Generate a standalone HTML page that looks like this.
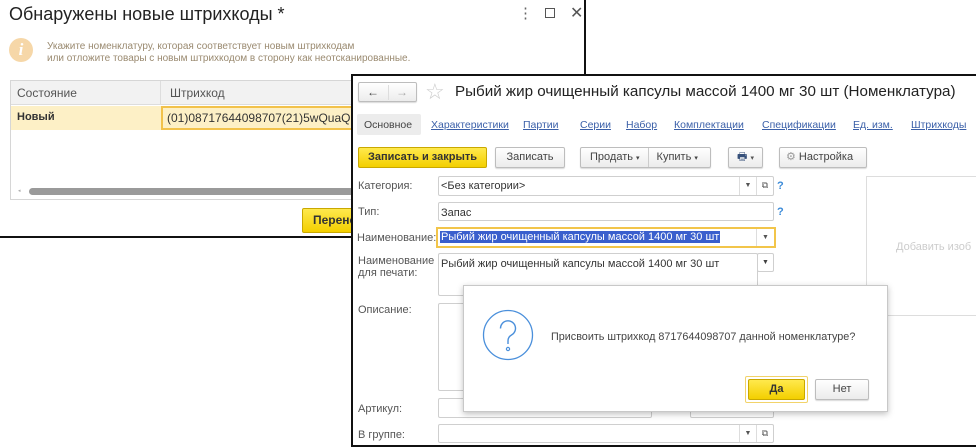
<!DOCTYPE html>
<html><head><meta charset="utf-8">
<style>
*{box-sizing:border-box;margin:0;padding:0}
body{width:976px;height:447px;background:#fff;position:relative;overflow:hidden;font-family:"Liberation Sans",Arial,sans-serif;font-size:11px;color:#404040}
.a{position:absolute;white-space:nowrap}
.inp{position:absolute;border:1px solid #cfcfcf;background:#fff;border-radius:2px}
.btn{position:absolute;border:1px solid #bdbdbd;border-radius:2px;background:linear-gradient(#fff,#ececec);text-align:center;color:#444;box-shadow:0 1px 1px rgba(0,0,0,.15);white-space:nowrap;font-size:11px}
.yb{position:absolute;border:1px solid #c9a800;border-radius:2px;background:linear-gradient(#ffe94d,#f3cf00);text-align:center;color:#333;font-weight:bold;white-space:nowrap}
.lnk{position:absolute;color:#3a5fa8;text-decoration:underline;font-size:10.5px;white-space:nowrap}
.dd{position:absolute;width:17px;border-left:1px solid #ddd;top:0;bottom:0;font-size:7px;text-align:center;color:#555}
</style></head><body>

<!-- window 1 -->
<div class="a" style="left:0;top:0;width:586px;height:238px;border:2px solid #111;border-top:none;border-left:none;background:#fff"></div>
<div class="a" style="left:9px;top:4px;font-size:18px;color:#222">Обнаружены новые штрихкоды *</div>
<div class="a" style="left:518px;top:4px;font-size:15px;color:#666">⋮</div>
<div class="a" style="left:545px;top:8px;width:10px;height:10px;border:1px solid #555"></div>
<div class="a" style="left:570px;top:3px;font-size:16px;color:#555">✕</div>
<div class="a" style="left:9px;top:38px;width:24px;height:24px;border-radius:50%;background:#f6d7a8;color:#fff;font:italic bold 17px 'Liberation Serif',serif;text-align:center;line-height:24px">i</div>
<div class="a" style="left:47px;top:41px;font-size:10px;color:#9a8a70;line-height:12px">Укажите номенклатуру, которая соответствует новым штрихкодам<br>или отложите товары с новым штрихкодом в сторону как неотсканированные.</div>
<div class="a" style="left:10px;top:80px;width:345px;height:120px;border:1px solid #d6d6d6"></div>
<div class="a" style="left:11px;top:81px;width:344px;height:24px;background:#f2f2f2;border-bottom:1px solid #ddd"></div>
<div class="a" style="left:160px;top:81px;width:1px;height:24px;background:#ddd"></div>
<div class="a" style="left:17px;top:86px;font-size:12px;color:#555">Состояние</div>
<div class="a" style="left:170px;top:86px;font-size:12px;color:#555">Штрихкод</div>
<div class="a" style="left:11px;top:106px;width:344px;height:24px;background:#fdf0c6"></div>
<div class="a" style="left:17px;top:111px;font-size:11px;font-weight:bold;color:#333">Новый</div>
<div class="a" style="left:161px;top:106px;width:194px;height:24px;border:2px solid #f2c24b;background:#fdf0c6"></div>
<div class="a" style="left:167px;top:111px;font-size:12px;color:#333">(01)08717644098707(21)5wQuaQ</div>
<div class="a" style="left:18px;top:188px;font-size:5px;color:#aaa">◂</div>
<div class="a" style="left:29px;top:188px;width:326px;height:7px;border-radius:4px;background:#9a9a9a"></div>
<div class="yb" style="left:302px;top:208px;width:60px;height:25px;font-size:12px;line-height:23px;text-align:left;padding-left:10px">Перене</div>

<!-- window 2 -->
<div class="a" style="left:351px;top:74px;width:625px;height:373px;border:2px solid #111;border-right:none;background:#fff"></div>
<div class="btn" style="left:358px;top:82px;width:59px;height:20px;font-size:12px;line-height:18px"><span style="position:absolute;left:8px;top:0;font-weight:bold">←</span><span style="position:absolute;left:29px;top:2px;width:1px;height:15px;background:#ddd"></span><span style="position:absolute;left:37px;top:0;color:#aaa;font-weight:bold">→</span></div>
<div class="a" style="left:425px;top:79px;font-size:22px;color:#ccc">☆</div>
<div class="a" style="left:455px;top:83px;font-size:15.2px;color:#222">Рыбий жир очищенный капсулы массой 1400 мг 30 шт (Номенклатура)</div>
<div class="a" style="left:357px;top:114px;width:64px;height:21px;background:#ececec;border-radius:2px"></div>
<div class="a" style="left:364px;top:119px;font-size:10.5px;color:#444">Основное</div>
<div class="lnk" style="left:431px;top:119px">Характеристики</div>
<div class="lnk" style="left:523px;top:119px">Партии</div>
<div class="lnk" style="left:580px;top:119px">Серии</div>
<div class="lnk" style="left:626px;top:119px">Набор</div>
<div class="lnk" style="left:674px;top:119px">Комплектации</div>
<div class="lnk" style="left:762px;top:119px">Спецификации</div>
<div class="lnk" style="left:853px;top:119px">Ед. изм.</div>
<div class="lnk" style="left:911px;top:119px">Штрихкоды</div>

<div class="yb" style="left:358px;top:147px;width:129px;height:21px;font-size:11px;line-height:19px">Записать и закрыть</div>
<div class="btn" style="left:495px;top:147px;width:70px;height:21px;line-height:19px">Записать</div>
<div class="btn" style="left:580px;top:147px;width:131px;height:21px;line-height:19px;text-align:left;padding-left:9px">Продать <span style="font-size:7px">▾</span><span style="display:inline-block;width:1px;height:19px;background:#ccc;vertical-align:top;margin:0 8px"></span>Купить <span style="font-size:7px">▾</span></div>
<div class="btn" style="left:728px;top:147px;width:35px;height:21px;line-height:19px;color:#36507a">🖶 <span style="font-size:7px;color:#555">▾</span></div>
<div class="btn" style="left:779px;top:147px;width:88px;height:21px;line-height:19px;text-align:left;padding-left:6px"><span style="color:#999">⚙</span> Настройка</div>

<div class="a" style="left:358px;top:180px;color:#555">Категория:</div>
<div class="inp" style="left:438px;top:176px;width:336px;height:20px"><span class="a" style="left:2px;top:3px;color:#333">&lt;Без категории&gt;</span><div class="dd" style="right:17px;line-height:17px">▼</div><div class="dd" style="right:0;line-height:17px;font-size:9px">⧉</div></div>
<div class="a" style="left:777px;top:180px;color:#3a8ad8;font-weight:bold">?</div>
<div class="a" style="left:358px;top:206px;color:#555">Тип:</div>
<div class="inp" style="left:438px;top:202px;width:336px;height:19px"><span class="a" style="left:2px;top:4px;color:#333">Запас</span></div>
<div class="a" style="left:777px;top:206px;color:#3a8ad8;font-weight:bold">?</div>
<div class="a" style="left:357px;top:232px;color:#555">Наименование:</div>
<div class="a" style="left:436px;top:227px;width:340px;height:21px;border:2px solid #f2c54a;background:#fff"><span class="a" style="left:2px;top:2px;background:#3a5fcd;color:#fff;padding:0 1px;font-size:11px">Рыбий жир очищенный капсулы массой 1400 мг 30 шт</span><div class="dd" style="right:0;width:18px;line-height:17px">▼</div></div>
<div class="a" style="left:358px;top:255px;color:#555;line-height:12px">Наименование<br>для печати:</div>
<div class="inp" style="left:438px;top:253px;width:320px;height:43px"><span class="a" style="left:2px;top:4px;color:#333">Рыбий жир очищенный капсулы массой 1400 мг 30 шт</span></div>
<div class="inp" style="left:757px;top:253px;width:17px;height:19px;font-size:7px;text-align:center;line-height:17px">▼</div>
<div class="a" style="left:358px;top:304px;color:#555">Описание:</div>
<div class="inp" style="left:438px;top:303px;width:336px;height:88px"></div>
<div class="a" style="left:866px;top:176px;width:110px;height:140px;border:1px solid #ddd;border-right:none"></div>
<div class="a" style="left:896px;top:241px;color:#ccc;font-size:11px">Добавить изоб</div>
<div class="a" style="left:358px;top:403px;color:#555">Артикул:</div>
<div class="inp" style="left:438px;top:398px;width:214px;height:20px"></div>
<div class="inp" style="left:690px;top:398px;width:84px;height:20px"></div>
<div class="a" style="left:358px;top:429px;color:#555">В группе:</div>
<div class="inp" style="left:438px;top:424px;width:336px;height:19px"><div class="dd" style="right:17px;line-height:17px">▼</div><div class="dd" style="right:0;line-height:17px;font-size:9px">⧉</div></div>

<!-- dialog -->
<div class="a" style="left:463px;top:285px;width:425px;height:127px;border:1px solid #c8c8c8;background:#fff;box-shadow:0 2px 6px rgba(0,0,0,.25)"></div>
<svg class="a" style="left:482px;top:309px" width="52" height="52" viewBox="0 0 52 52"><circle cx="26" cy="26" r="24.5" fill="none" stroke="#4a8fdb" stroke-width="1.3"/><path d="M18.5 19.5a7.5 7.5 0 1 1 11 6.5c-2.5 1.4-3.5 3-3.5 6v3" fill="none" stroke="#4a8fdb" stroke-width="1.4"/><circle cx="26" cy="40" r="1.6" fill="none" stroke="#4a8fdb" stroke-width="1.2"/></svg>
<div class="a" style="left:551px;top:331px;color:#444;font-size:10.8px">Присвоить штрихкод 8717644098707 данной номенклатуре?</div>
<div class="a" style="left:745px;top:376px;width:63px;height:27px;border:1px solid #f2d36a;border-radius:2px"></div>
<div class="yb" style="left:748px;top:379px;width:57px;height:21px;line-height:19px;font-size:11px">Да</div>
<div class="btn" style="left:815px;top:379px;width:54px;height:21px;line-height:19px">Нет</div>
</body></html>
